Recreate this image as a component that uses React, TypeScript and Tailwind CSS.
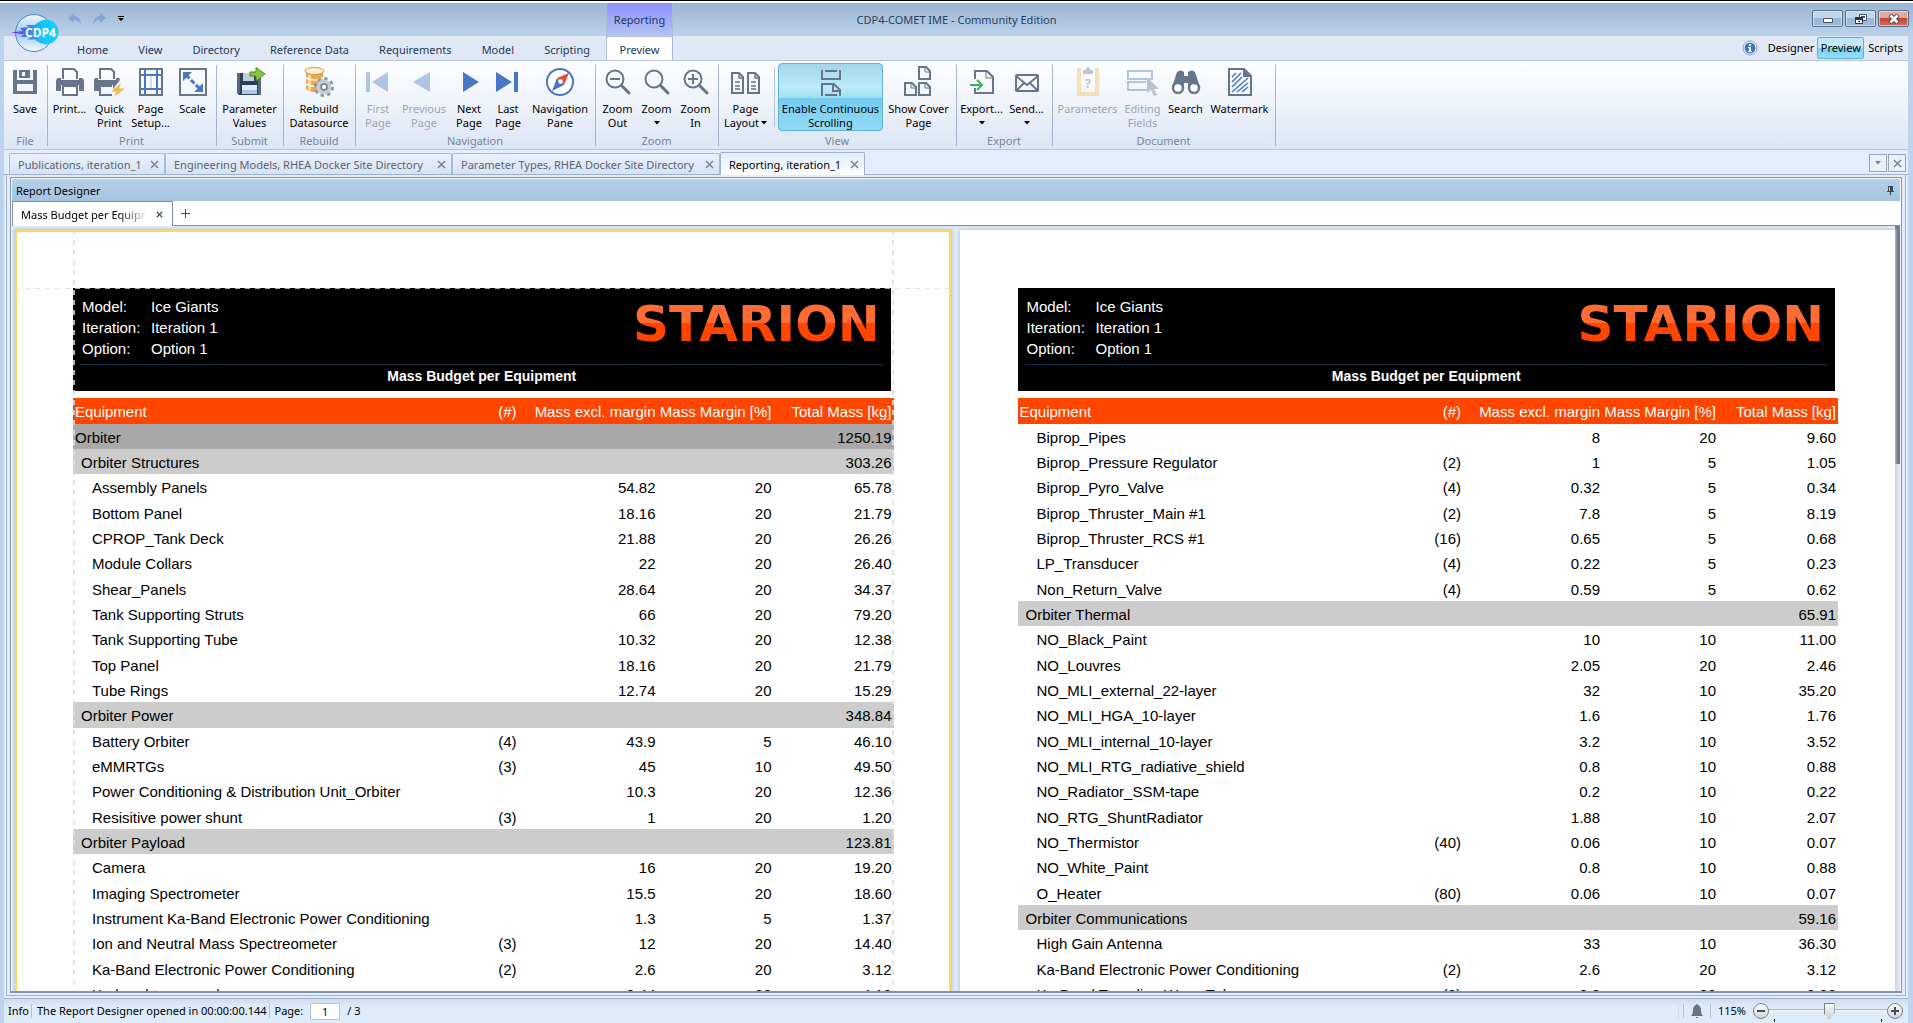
import React from 'react';
import { clsx } from 'clsx';

const SLATE = '#66758a';
const BLUE = '#4a76c3';

/* ---------- icons ---------- */

const Icon: React.FC<{ children: React.ReactNode; faded?: boolean }> = ({ children, faded }) => (
  <svg viewBox="0 0 32 32" className={clsx('h-8 w-8 shrink-0', faded && 'opacity-40')} fill="none" aria-hidden="true">
    {children}
  </svg>
);

const SaveIcon = () => (
  <Icon>
    <path fill={SLATE} fillRule="evenodd" d="M4 4h4v10h16V4h4v24H4zM8 18v7h16v-7z" />
    <path fill={SLATE} fillRule="evenodd" d="M10 4h11v8H10zM13 6v4h3V6z" />
  </Icon>
);

const PrintIcon = () => (
  <Icon>
    <path stroke={SLATE} strokeWidth="2" d="M9 13V3h11l3 3v7" />
    <path fill={SLATE} d="M4 12h3v2h18v-2h3q2 1 2 3v10h-5v-6H7v6H2V15q0-2 2-3z" />
    <path stroke={SLATE} strokeWidth="2" fill="#fff" d="M9 20h14v9H9z" />
  </Icon>
);

const QuickPrintIcon = () => (
  <Icon>
    <path stroke={SLATE} strokeWidth="2" d="M6 13V3h11l3 3v7" />
    <path fill={SLATE} d="M1 12h3v2h18v-2h3q1 1 1 2l-7 9v-4H5v6H0V14z" />
    <path stroke={SLATE} strokeWidth="2" d="M18 20H6v9h12" />
    <path fill="#f2b84b" d="M27 17 17 25.500h5.500L20 31l11-8.500h-6z" />
  </Icon>
);

const PageSetupIcon = () => (
  <Icon>
    <path stroke={SLATE} strokeWidth="2" d="M5 3h22v26H5z" />
    <path stroke={BLUE} strokeWidth="2" d="M10 4v24M22 4v24M6 9h20M6 23h20" />
    <path stroke="#a9c0e8" d="M16 10v12" />
  </Icon>
);

const ScaleIcon = () => (
  <Icon>
    <path stroke={SLATE} strokeWidth="2" d="M3 3h26v26H3z" />
    <path fill={BLUE} d="M6 6h9l-9 9zM26 26h-9l9-9z" />
    <path stroke={BLUE} strokeWidth="3" strokeDasharray="5 2" d="m9 9 14 14" />
  </Icon>
);

const ParameterValuesIcon = () => (
  <Icon>
    <path fill="#2f3f57" d="M3 7h24v22H5l-2-2z" />
    <path fill="#56677f" d="M3 7h3v20H3zM24 7h3v22h-3z" />
    <path fill="#c3cedd" d="M9 7h11v8H9z" />
    <path fill="#dcebfa" d="M8 19h15v9H8z" />
    <path fill="#a9c9ec" d="M8 24h15v4H8z" />
    <path fill="#8cc63e" stroke="#4d8a1c" d="M16 6h6V1.500L31 8l-9 7v-5h-6z" />
  </Icon>
);

const RebuildIcon = () => (
  <Icon>
    <path fill="#f0a743" d="M3 5v18q4 4 14 3l3-4V5z" />
    <path fill="#fbd9a0" d="M5 8v16l3 1V9z" />
    <ellipse cx="11.500" cy="5" rx="9.500" ry="3.500" fill="#fff1d8" stroke="#d99336" />
    <path stroke="#fff" strokeWidth="1.500" d="M3 12q8 4 17 0M3 18q8 4 14 1" />
    <circle cx="21" cy="21" r="8" stroke="#8a93a3" strokeWidth="4" strokeDasharray="3.140 3.140" />
    <circle cx="21" cy="21" r="5.500" fill="#dfe3ea" stroke="#c7cdd8" strokeWidth="4" />
    <circle cx="21" cy="21" r="3" fill="#fff" stroke="#707a8b" strokeWidth="1.500" />
  </Icon>
);

const FirstIcon = () => (
  <Icon faded>
    <path fill={BLUE} d="M4 6h4v20H4zM26 6v20L10 16z" />
  </Icon>
);
const PreviousIcon = () => (
  <Icon faded>
    <path fill={BLUE} d="M22 6v20L5 16z" />
  </Icon>
);
const NextIcon = () => (
  <Icon>
    <path fill={BLUE} d="M10 6v20l16-10z" />
  </Icon>
);
const LastIcon = () => (
  <Icon>
    <path fill={BLUE} d="M4 6v20l16-10zM22 6h4v20h-4z" />
  </Icon>
);

const CompassIcon = () => (
  <Icon>
    <circle cx="16" cy="16" r="13" stroke={BLUE} strokeWidth="2" fill="#fff" />
    <path fill="#e54b4b" d="M25 7 20 19l-7-7z" />
    <path fill={BLUE} d="m8 25 5-13 7 7z" />
    <circle cx="16.500" cy="15.500" r="2.300" fill="#fff" />
  </Icon>
);

const ZoomIcon: React.FC<{ sign?: 'in' | 'out' }> = ({ sign }) => (
  <Icon>
    <circle cx="13" cy="13" r="8.500" stroke={SLATE} strokeWidth="2" />
    <path stroke={SLATE} strokeWidth="3" strokeLinecap="round" d="m20 20 7 7" />
    {sign && <path stroke={SLATE} strokeWidth="2" d={sign === 'in' ? 'M8 13h10M13 8v10' : 'M8 13h10'} />}
  </Icon>
);

const PageLayoutIcon = () => (
  <Icon>
    <path stroke={SLATE} strokeWidth="2" d="M2 7h7l4 4v16H2zM18 7h7l4 4v16H18z" />
    <path stroke={SLATE} strokeWidth="1.500" d="M9 7v5h4M25 7v5h4M5 16h5M5 20h5M5 23h5M21 16h5M21 20h5M21 23h5" />
  </Icon>
);

const ContinuousIcon = () => (
  <Icon>
    <path stroke={SLATE} strokeWidth="2" d="M7 4v9h18V4M10 5h12M7 30V18h12l6 6v6M10 29h12" />
    <path stroke={SLATE} strokeWidth="2" d="M18 18v7h7" />
  </Icon>
);

const CoverPageIcon = () => (
  <Icon>
    <path stroke={SLATE} strokeWidth="2" d="M16 1h7l4 4v8H16zM2 17h7l4 4v8H2zM16 17h7l4 4v8H16z" />
    <path stroke={SLATE} d="M22 1v5h5M8 17v5h5M22 17v5h5" />
  </Icon>
);

const ExportIcon = () => (
  <Icon>
    <path stroke={SLATE} strokeWidth="2" d="M9 13V5h12l6 6v16H9v-5" />
    <path stroke={SLATE} d="M20 5v7h7" />
    <path stroke="#3fae5f" strokeWidth="2" d="M4 19h11M11 14l5 5-5 5" />
  </Icon>
);

const SendIcon = () => (
  <Icon>
    <rect x="5" y="9" width="22" height="16" rx="1" stroke={SLATE} strokeWidth="2" />
    <path stroke={SLATE} strokeWidth="2" d="m5 10 11 9 11-9M5 25l8-8M27 25l-8-8" />
  </Icon>
);

const ParametersIcon = () => (
  <Icon faded>
    <path stroke="#edbe55" strokeWidth="4" d="M9 4H7v24h18V4h-2" />
    <path fill={SLATE} d="M11 4h3q0-3 2-3t2 3h3v4H11z" />
    <text x="16" y="22" textAnchor="middle" className="font-['Open_Sans'] text-[13px] font-bold" fill={SLATE}>?</text>
  </Icon>
);

const EditingFieldsIcon = () => (
  <Icon faded>
    <path stroke={BLUE} strokeWidth="2" d="M20 24H1v-8h18M1 5h24v8H1z" />
    <path fill={SLATE} d="M20 11v16l4-3 3 6 3-1-3-6h5z" />
  </Icon>
);

const SearchIcon = () => (
  <Icon>
    <path fill={SLATE} d="M7 6q4-3 7 0v4h4V6q4-3 7 0l5 15H18v-4h-4v4H2z" />
    <circle cx="8" cy="22" r="5" fill="#fff" stroke={SLATE} strokeWidth="2.500" />
    <circle cx="24" cy="22" r="5" fill="#fff" stroke={SLATE} strokeWidth="2.500" />
  </Icon>
);

const WatermarkIcon = () => (
  <Icon>
    <path stroke={SLATE} strokeWidth="2" d="M5 3h15l7 7v19H5z" />
    <path fill={SLATE} d="M19 3v8h8z" />
    <path
      stroke={BLUE}
      strokeWidth="1.500"
      d="m8 11 4-4M8 16l9-9M8 21 18 11M8 26 24 12M13 26l11-9M18 26l6-5"
    />
  </Icon>
);

const AppLogo = () => (
  <svg viewBox="0 0 48 40" className="h-10 w-12" aria-label="CDP4">
    <defs>
      <linearGradient id="orb" x1="0" y1="0" x2="0" y2="1">
        <stop offset="0" stopColor="#f2f9ff" />
        <stop offset="0.500" stopColor="#9cc9ee" />
        <stop offset="1" stopColor="#f4faff" />
      </linearGradient>
      <linearGradient id="comet" x1="0" y1="0" x2="1" y2="0">
        <stop offset="0" stopColor="#8a18f0" />
        <stop offset="0.350" stopColor="#3b7df5" />
        <stop offset="0.700" stopColor="#12ccff" />
      </linearGradient>
    </defs>
    <circle cx="23" cy="20" r="18.500" fill="url(#orb)" stroke="#4b87bd" />
    <path
      fill="url(#comet)"
      d="M0 19.500 12 18l-3-3 9-1-3-2h9q5-5 11-5.500a12.500 12.500 0 0 1 0 25q-7-1-11-5h-8l4-2-11-1 4-2z"
    />
    <text x="14" y="24" className="font-['Open_Sans'] text-[12px] font-bold" fill="#fff">CDP4</text>
  </svg>
);

/* ---------- ribbon ---------- */

interface RibbonItem {
  lines: string[];
  icon: React.ReactNode;
  width: string;
  arrow?: 'inline' | 'below';
  disabled?: boolean;
  active?: boolean;
  divider?: boolean;
}

interface RibbonGroup {
  label: string;
  width: string;
  items: RibbonItem[];
}

const ribbonGroups: RibbonGroup[] = [
  { label: 'File', width: 'w-[44px]', items: [{ lines: ['Save'], icon: <SaveIcon />, width: 'w-[40px]' }] },
  {
    label: 'Print',
    width: 'w-[169px]',
    items: [
      { lines: ['Print...'], icon: <PrintIcon />, width: 'w-[40px]' },
      { lines: ['Quick', 'Print'], icon: <QuickPrintIcon />, width: 'w-[40px]' },
      { lines: ['Page', 'Setup...'], icon: <PageSetupIcon />, width: 'w-[42px]' },
      { lines: ['Scale'], icon: <ScaleIcon />, width: 'w-[42px]' },
    ],
  },
  { label: 'Submit', width: 'w-[67px]', items: [{ lines: ['Parameter', 'Values'], icon: <ParameterValuesIcon />, width: 'w-[62px]' }] },
  { label: 'Rebuild', width: 'w-[72px]', items: [{ lines: ['Rebuild', 'Datasource'], icon: <RebuildIcon />, width: 'w-[68px]' }] },
  {
    label: 'Navigation',
    width: 'w-[240px]',
    items: [
      { lines: ['First', 'Page'], icon: <FirstIcon />, width: 'w-[40px]', disabled: true },
      { lines: ['Previous', 'Page'], icon: <PreviousIcon />, width: 'w-[52px]', disabled: true },
      { lines: ['Next', 'Page'], icon: <NextIcon />, width: 'w-[38px]' },
      { lines: ['Last', 'Page'], icon: <LastIcon />, width: 'w-[40px]' },
      { lines: ['Navigation', 'Pane'], icon: <CompassIcon />, width: 'w-[64px]' },
    ],
  },
  {
    label: 'Zoom',
    width: 'w-[123px]',
    items: [
      { lines: ['Zoom', 'Out'], icon: <ZoomIcon sign="out" />, width: 'w-[39px]' },
      { lines: ['Zoom'], icon: <ZoomIcon />, width: 'w-[39px]', arrow: 'below' },
      { lines: ['Zoom', 'In'], icon: <ZoomIcon sign="in" />, width: 'w-[39px]' },
    ],
  },
  {
    label: 'View',
    width: 'w-[238px]',
    items: [
      { lines: ['Page', 'Layout'], icon: <PageLayoutIcon />, width: 'w-[51px]', arrow: 'inline' },
      { lines: ['Enable Continuous', 'Scrolling'], icon: <ContinuousIcon />, width: 'w-[105px]', active: true, divider: true },
      { lines: ['Show Cover', 'Page'], icon: <CoverPageIcon />, width: 'w-[71px]' },
    ],
  },
  {
    label: 'Export',
    width: 'w-[96px]',
    items: [
      { lines: ['Export...'], icon: <ExportIcon />, width: 'w-[45px]', arrow: 'below' },
      { lines: ['Send...'], icon: <SendIcon />, width: 'w-[45px]', arrow: 'below' },
    ],
  },
  {
    label: 'Document',
    width: 'w-[223px]',
    items: [
      { lines: ['Parameters'], icon: <ParametersIcon />, width: 'w-[66px]', disabled: true },
      { lines: ['Editing', 'Fields'], icon: <EditingFieldsIcon />, width: 'w-[44px]', disabled: true },
      { lines: ['Search'], icon: <SearchIcon />, width: 'w-[42px]' },
      { lines: ['Watermark'], icon: <WatermarkIcon />, width: 'w-[66px]' },
    ],
  },
];

const DownArrow = () => (
  <svg viewBox="0 0 6 4" className="h-1 w-1.5" aria-hidden="true">
    <path fill="currentColor" d="M0 0h6L3 3.500z" />
  </svg>
);

const RibbonButton: React.FC<{ item: RibbonItem }> = ({ item }) => (
  <>
    {item.divider && <span className="mx-[3px] mt-1 h-[60px] w-px bg-[#b4c3dc]" />}
    <button
      type="button"
      disabled={item.disabled}
      className={clsx(
        'flex h-[68px] shrink-0 flex-col items-center rounded-sm border whitespace-nowrap',
        item.width,
        item.active
          ? 'border-[#5fb1d8] bg-[linear-gradient(#a3d6ea_0,#bdeafa_24px,#9fdef5_34px,#74cdf1_34px,#92d9f6_100%)]'
          : 'border-transparent',
        item.disabled ? 'text-[#a0a5ae]' : 'text-black'
      )}
    >
      <span className="flex h-[38px] items-start pt-[2px]">{item.icon}</span>
      {item.lines.map((line, i) => (
        <span key={line} className="flex items-center gap-[2px] leading-[14px]">
          {line}
          {item.arrow === 'inline' && i === item.lines.length - 1 && <DownArrow />}
        </span>
      ))}
      {item.arrow === 'below' && (
        <span className="flex h-[14px] items-center">
          <DownArrow />
        </span>
      )}
    </button>
  </>
);

const Ribbon = () => (
  <div className="flex h-[90px] shrink-0 border-y border-[#b4c4de] bg-[linear-gradient(#fdfeff,#eef3fa_50%,#e3e9f6_80%,#dbe7f4)]">
    {ribbonGroups.map(group => (
      <section key={group.label} className={clsx('relative flex shrink-0 flex-col items-center pt-[2px] pr-[2px]', group.width)}>
        <div className="flex justify-center">
          {group.items.map(item => (
            <RibbonButton key={item.lines.join(' ')} item={item} />
          ))}
        </div>
        <h2 className="mt-[3px] leading-[14px] text-[#76849b]">{group.label}</h2>
        <span className="absolute top-1 right-0 h-[81px] w-px bg-[#a5b5cd]" />
      </section>
    ))}
  </div>
);

/* ---------- window chrome ---------- */

const ribbonTabs = ['Home', 'View', 'Directory', 'Reference Data', 'Requirements', 'Model', 'Scripting'];

const windowButton =
  'flex items-center justify-center rounded-[2px] border border-[#55708f] h-[17px] w-[31px] shadow-[inset_0_0_0_1px_#ffffff80]';

const TitleBar = () => (
  <div className="grid h-[33px] shrink-0 grid-cols-[1fr_auto_1fr] items-start bg-linear-to-b from-[#9ab5d4] to-[#bdd1ea]">
    <div className="flex items-center gap-[12px] pt-[10px] pl-[68px]">
      <button type="button" aria-label="Undo">
        <svg viewBox="0 0 13 11" className="h-[11px] w-[13px]">
          <path fill="#86a5d6" d="M6 0v3q6 0 7 8-2-4-7-4v3L0 5z" />
        </svg>
      </button>
      <button type="button" aria-label="Redo">
        <svg viewBox="0 0 13 11" className="h-[11px] w-[13px]">
          <path fill="#86a5d6" d="M7 0v3Q1 3 0 11q2-4 7-4v3l6-5z" />
        </svg>
      </button>
      <button type="button" aria-label="Customize toolbar">
        <svg viewBox="0 0 6 5" className="h-[5px] w-[6px]">
          <path d="M0 0h6v1H0zM0 2h6L3 5z" />
        </svg>
      </button>
    </div>
    <h1 className="pt-[8px] leading-[18px] text-[#27405f]">CDP4-COMET IME - Community Edition</h1>
    <div className="flex justify-end gap-[2px] pt-[7px] pr-[4px]">
      <button type="button" aria-label="Minimize" className={clsx(windowButton, 'bg-[linear-gradient(#c4d6ea_50%,#9db9d8_50%)]')}>
        <svg viewBox="0 0 12 10" className="h-[10px] w-[12px]">
          <path fill="#fff" stroke="#44536b" d="M1.500 4.500h9v4h-9z" />
        </svg>
      </button>
      <button type="button" aria-label="Restore" className={clsx(windowButton, 'bg-[linear-gradient(#c4d6ea_50%,#9db9d8_50%)]')}>
        <svg viewBox="0 0 12 12" className="h-[12px] w-[12px]">
          <path fill="#fff" stroke="#44536b" d="M4.500 1.500h7v6h-7z" />
          <path fill="#44536b" d="M6 3h4v2H6z" />
          <path fill="#fff" stroke="#27344a" d="M.500 4.500h7v6h-7z" />
          <path fill="#27344a" d="M0 4h8v3H0zM3 8h2v1H3z" />
        </svg>
      </button>
      <button
        type="button"
        aria-label="Close"
        className={clsx(windowButton, 'border-[#5c1822] bg-[linear-gradient(#e4a79e_50%,#c2452f_50%,#d2705c)]')}
      >
        <svg viewBox="0 0 12 10" className="h-[10px] w-[12px]">
          <path stroke="#4a4d62" strokeWidth="4.500" d="m2 1 8 8M10 1 2 9" />
          <path stroke="#fff" strokeWidth="2.500" d="m2.500 1.500 7 7M9.500 1.500l-7 7" />
        </svg>
      </button>
    </div>
  </div>
);

const RibbonTabs = () => (
  <nav className="flex h-[24px] shrink-0 items-stretch bg-[#dfe8f4] pl-[73px] text-[#1e3957]">
    <div className="flex w-[529px] items-center justify-between pt-[3px] pr-[16px]">
      {ribbonTabs.map(tab => (
        <a key={tab} href="#" className="whitespace-nowrap">
          {tab}
        </a>
      ))}
    </div>
    {/* Contextual tab reaches up into the title bar */}
    <div className="-mt-[33px] flex w-[67px] flex-col border-x border-[#a9bcd8] bg-linear-to-b from-[#8f90ff] via-[#b5c4ee] via-60% to-[#bdd1ea] text-center">
      <span className="h-[34px] pt-[8px] leading-[18px]">Reporting</span>
      <a href="#" aria-current="page" className="-mb-px h-[24px] rounded-t-[2px] bg-white pt-[4px] leading-[18px]">
        Preview
      </a>
    </div>
    <div className="flex flex-1 items-center justify-end text-black">
      <svg viewBox="0 0 16 16" className="mr-[7px] h-4 w-4" aria-label="Info">
        <circle cx="8" cy="8" r="7" fill="#fff" stroke="#8b9cc0" />
        <circle cx="8" cy="8" r="5.500" fill="#3f74c6" />
        <path fill="#fff" d="M7 4h2v2H7zM6 7h3v4h1v1H6v-1h1V8H6z" />
      </svg>
      <button type="button" className="px-[3px]">Designer</button>
      <button
        type="button"
        className="h-[22px] w-[47px] rounded-[2px] border border-[#5fb1d8] bg-[linear-gradient(#bde9f9_50%,#7dd0f2_50%,#97dbf6)]"
      >
        Preview
      </button>
      <button type="button" className="pr-[5px] pl-[4px]">Scripts</button>
    </div>
  </nav>
);

const Cross: React.FC<{ size?: string }> = ({ size = 'h-[9px] w-[9px]' }) => (
  <svg viewBox="0 0 9 9" className={size} aria-hidden="true">
    <path stroke="currentColor" strokeWidth="1.500" d="m1 1 7 7M8 1 1 8" />
  </svg>
);

const documentTabs = [
  { label: 'Publications, iteration_1', width: 'w-[156px]' },
  { label: 'Engineering Models, RHEA Docker Site Directory', width: 'w-[287px]' },
  { label: 'Parameter Types, RHEA Docker Site Directory', width: 'w-[268px]' },
  { label: 'Reporting, iteration_1', width: 'w-[145px]', active: true },
];

const DocumentTabs = () => (
  <div className="flex h-[25px] shrink-0 items-end border-b border-[#9fb1cc] bg-[#e2eefe] pr-[2px] pl-[5px]">
    {documentTabs.map(tab => (
      <div
        key={tab.label}
        className={clsx(
          'flex items-center justify-between rounded-t-[2px] border border-b-0 pt-[2px] pr-[5px] pl-[8px] whitespace-nowrap',
          tab.width,
          tab.active
            ? '-mb-px h-[23px] border-[#9fb1cc] bg-linear-to-b from-[#dcedfb] to-white text-black'
            : 'h-[21px] border-[#a9b9d2] bg-linear-to-b from-[#eaf2fc] to-[#d5e3f5] text-[#5b6470]'
        )}
      >
        <a href="#">{tab.label}</a>
        <button type="button" aria-label={`Close ${tab.label}`} className="pb-[2px] text-[#76849b]">
          <Cross />
        </button>
      </div>
    ))}
    <div className="flex flex-1 justify-end gap-px pb-[2px] text-[#76849b]">
      <button type="button" aria-label="Open documents" className="flex h-[18px] w-[18px] items-center justify-center border border-[#94a5be] bg-[#e9f0f8]">
        <DownArrow />
      </button>
      <button type="button" aria-label="Close document" className="flex h-[18px] w-[18px] items-center justify-center border border-[#94a5be] bg-[#e9f0f8]">
        <Cross />
      </button>
    </div>
  </div>
);

/* ---------- report ---------- */

// [name, count, mass excl. margin, margin, total]
type Row = { level: 0 | 1 | 2; cells: [string, string, string, string, string] };

const group = (level: 0 | 1, name: string, total: string): Row => ({ level, cells: [name, '', '', '', total] });
const item = (name: string, count: string, mass: string, margin: string, total: string): Row => ({
  level: 2,
  cells: [name, count, mass, margin, total],
});

const leftRows: Row[] = [
  group(0, 'Orbiter', '1250.19'),
  group(1, 'Orbiter Structures', '303.26'),
  item('Assembly Panels', '', '54.82', '20', '65.78'),
  item('Bottom Panel', '', '18.16', '20', '21.79'),
  item('CPROP_Tank Deck', '', '21.88', '20', '26.26'),
  item('Module Collars', '', '22', '20', '26.40'),
  item('Shear_Panels', '', '28.64', '20', '34.37'),
  item('Tank Supporting Struts', '', '66', '20', '79.20'),
  item('Tank Supporting Tube', '', '10.32', '20', '12.38'),
  item('Top Panel', '', '18.16', '20', '21.79'),
  item('Tube Rings', '', '12.74', '20', '15.29'),
  group(1, 'Orbiter Power', '348.84'),
  item('Battery Orbiter', '(4)', '43.9', '5', '46.10'),
  item('eMMRTGs', '(3)', '45', '10', '49.50'),
  item('Power Conditioning & Distribution Unit_Orbiter', '', '10.3', '20', '12.36'),
  item('Resisitive power shunt', '(3)', '1', '20', '1.20'),
  group(1, 'Orbiter Payload', '123.81'),
  item('Camera', '', '16', '20', '19.20'),
  item('Imaging Spectrometer', '', '15.5', '20', '18.60'),
  item('Instrument Ka-Band Electronic Power Conditioning', '', '1.3', '5', '1.37'),
  item('Ion and Neutral Mass Spectreometer', '(3)', '12', '20', '14.40'),
  item('Ka-Band Electronic Power Conditioning', '(2)', '2.6', '20', '3.12'),
  item('Ka-band transponder', '', '3.44', '20', '4.13'),
];

const rightRows: Row[] = [
  item('Biprop_Pipes', '', '8', '20', '9.60'),
  item('Biprop_Pressure Regulator', '(2)', '1', '5', '1.05'),
  item('Biprop_Pyro_Valve', '(4)', '0.32', '5', '0.34'),
  item('Biprop_Thruster_Main #1', '(2)', '7.8', '5', '8.19'),
  item('Biprop_Thruster_RCS #1', '(16)', '0.65', '5', '0.68'),
  item('LP_Transducer', '(4)', '0.22', '5', '0.23'),
  item('Non_Return_Valve', '(4)', '0.59', '5', '0.62'),
  group(1, 'Orbiter Thermal', '65.91'),
  item('NO_Black_Paint', '', '10', '10', '11.00'),
  item('NO_Louvres', '', '2.05', '20', '2.46'),
  item('NO_MLI_external_22-layer', '', '32', '10', '35.20'),
  item('NO_MLI_HGA_10-layer', '', '1.6', '10', '1.76'),
  item('NO_MLI_internal_10-layer', '', '3.2', '10', '3.52'),
  item('NO_MLI_RTG_radiative_shield', '', '0.8', '10', '0.88'),
  item('NO_Radiator_SSM-tape', '', '0.2', '10', '0.22'),
  item('NO_RTG_ShuntRadiator', '', '1.88', '10', '2.07'),
  item('NO_Thermistor', '(40)', '0.06', '10', '0.07'),
  item('NO_White_Paint', '', '0.8', '10', '0.88'),
  item('O_Heater', '(80)', '0.06', '10', '0.07'),
  group(1, 'Orbiter Communications', '59.16'),
  item('High Gain Antenna', '', '33', '10', '36.30'),
  item('Ka-Band Electronic Power Conditioning', '(2)', '2.6', '20', '3.12'),
  item('Ka-Band Traveling Wave Tube', '(2)', '2.8', '20', '3.36'),
];

const details = [
  ['Model:', 'Ice Giants'],
  ['Iteration:', 'Iteration 1'],
  ['Option:', 'Option 1'],
];

const headings = ['Equipment', '(#)', 'Mass excl. margin', 'Mass Margin [%]', 'Total Mass [kg]'];

const ReportPage: React.FC<{ rows: Row[]; selected?: boolean }> = ({ rows, selected }) => (
  <article
    className={clsx(
      "relative flex-1 bg-white pt-[58px] pr-[57px] pl-[58px] font-['Liberation_Sans',Arial,sans-serif] text-[15px] text-black",
      selected ? 'shadow-[0_0_3px_1px_#b9c6e0]' : 'shadow-[0_0_3px_1px_#c3cee4]'
    )}
  >
    <header className="mr-[3px] h-[103px] bg-black text-white">
      <div className="flex h-[76px] items-start justify-between pt-[8px] pr-[11px] pl-[9px]">
        <dl className="grid grid-cols-[69px_auto] leading-[21px]">
          {details.map(([term, value]) => (
            <React.Fragment key={term}>
              <dt>{term}</dt>
              <dd>{value}</dd>
            </React.Fragment>
          ))}
        </dl>
        <div className="bg-[linear-gradient(#ff6b35_48%,#ff4500_48%)] bg-clip-text font-['DejaVu_Sans',sans-serif] text-[50px] leading-[56px] font-bold text-transparent">
          STARION
        </div>
      </div>
      <h2 className="mx-[7px] border-t border-[#12304c] pt-px text-center text-[14px] leading-[20px] font-bold">
        Mass Budget per Equipment
      </h2>
    </header>
    <table className="mt-[7px] w-full table-fixed border-collapse whitespace-nowrap">
      <colgroup>
        <col />
        <col className="w-[49px]" />
        <col className="w-[139px]" />
        <col className="w-[116px]" />
        <col className="w-[122px]" />
      </colgroup>
      <thead>
        <tr className="h-[26px] bg-[#ff4500] text-white">
          {headings.map((heading, i) => (
            <th
              key={heading}
              scope="col"
              className={clsx('pt-[2px] pb-0 leading-[20px] font-normal', i === 0 ? 'pl-[2px] text-left' : 'text-right', i === 4 && 'pr-[2px]')}
            >
              {heading}
            </th>
          ))}
        </tr>
      </thead>
      <tbody>
        {rows.map(({ level, cells }) => (
          <tr
            key={cells[0]}
            className={clsx('h-[25px] nth-[3n]:h-[26px]', level === 0 && 'bg-[#a9a9a9]', level === 1 && 'bg-[#cccccc]')}
          >
            {cells.map((cell, i) => (
              <td
                key={i}
                className={clsx(
                  'pt-[2px] pb-0 leading-[20px]',
                  i > 0 && 'text-right',
                  i === 4 && 'pr-[2px]',
                  i === 0 && level === 0 && 'pl-[2px]',
                  i === 0 && level === 1 && 'pl-[8px]',
                  i === 0 && level === 2 && 'pl-[19px]'
                )}
              >
                {cell}
              </td>
            ))}
          </tr>
        ))}
      </tbody>
    </table>
    {selected && (
      <>
        {/* Margin guides and selection frame */}
        <span className="absolute inset-y-0 left-[58px] w-[2px] bg-[repeating-linear-gradient(#ddddddcc_0_5px,transparent_5px_10px)]" />
        <span className="absolute inset-y-0 right-[57px] w-[2px] bg-[repeating-linear-gradient(#ddddddcc_0_5px,transparent_5px_10px)]" />
        <span className="absolute inset-x-0 top-[58px] h-px bg-[repeating-linear-gradient(90deg,#ddddddcc_0_5px,transparent_5px_10px)]" />
        <span className="absolute inset-0 border-2 border-b-0 border-[#ffd955]" />
      </>
    )}
  </article>
);

const ReportPanel = () => (
  <section className="flex min-h-0 flex-1 flex-col border border-b-2 border-[#8494ae] bg-white p-px pb-0">
    <div className="flex h-[22px] shrink-0 items-center justify-between bg-linear-to-b from-[#b7d0e8] to-[#a4c3e1] pt-px pr-[6px] pl-[4px] text-black">
      <h2>Report Designer</h2>
      <button type="button" aria-label="Pin">
        <svg viewBox="0 0 7 9" className="h-[9px] w-[7px]">
          <path fill="#3c4758" d="M1 0h5v5h1v1H4v3H3V6H0V5h1zM2 1v4h1V1z" />
        </svg>
      </button>
    </div>
    <div className="flex h-[25px] shrink-0 items-stretch border-b border-[#838da0] bg-white text-black">
      <div className="-mb-px flex w-[161px] items-center justify-between border border-b-0 border-[#838da0] bg-white pt-px pr-[9px] pl-[8px]">
        <a href="#" className="w-[124px] overflow-hidden bg-[linear-gradient(90deg,#000_80%,#00000020)] bg-clip-text whitespace-nowrap text-transparent">
          Mass Budget per Equipment
        </a>
        <button type="button" aria-label="Close report" className="text-[#444b58]">
          <Cross size="h-[7px] w-[7px]" />
        </button>
      </div>
      <button type="button" aria-label="New report" className="px-[8px] text-[#444b58]">
        <svg viewBox="0 0 9 9" className="h-[9px] w-[9px]">
          <path stroke="currentColor" d="M4.500 0v9M0 4.500h9" />
        </svg>
      </button>
    </div>
    <div className="flex min-h-0 flex-1 overflow-hidden bg-[#dfe9f8]">
      <div className="flex flex-1 gap-[9px] pt-[4px] pl-[3px]">
        <ReportPage rows={leftRows} selected />
        <ReportPage rows={rightRows} />
      </div>
      <div className="w-[5px] bg-[#dbe5f4]">
        <div className="h-[238px] bg-[#6b7585]" />
      </div>
    </div>
  </section>
);

/* ---------- status bar ---------- */

const Separator = () => <span className="h-[14px] w-px bg-[#b3c2d8]" />;

const zoomButton =
  'flex h-[16px] w-[16px] items-center justify-center rounded-full border border-[#7b7f86] bg-linear-to-b from-white to-[#d2d4d8]';

const StatusBar = () => (
  <footer className="flex h-[25px] shrink-0 items-center border-t border-[#9fb1cc] bg-linear-to-b from-[#cfdcec] to-[#deebf8] to-30% pr-[5px] pl-[4px] text-black">
    <span>Info</span>
    <span className="mr-[5px] ml-[2px] flex"><Separator /></span>
    <span>The Report Designer opened in 00:00:00.144</span>
    <span className="mr-[5px] ml-[2px] flex"><Separator /></span>
    <label htmlFor="page">Page:</label>
    <input
      id="page"
      type="text"
      defaultValue="1"
      className="mx-[7px] h-[17px] w-[30px] rounded-[1px] border border-[#b9c3d2] bg-white text-center"
    />
    <span>/ 3</span>
    <div className="flex flex-1 items-center justify-end">
      <span className="mr-[4px] flex opacity-40"><Separator /></span>
      <Separator />
      <svg viewBox="0 0 12 14" className="mx-[7px] h-[14px] w-[12px]" aria-label="Notifications">
        <path fill={SLATE} d="M6 0q1 0 1 1 3 1 3 5 0 4 2 6H0q2-2 2-6 0-4 3-5 0-1 1-1zM5 13h2v1H5z" />
      </svg>
      <Separator />
      <label htmlFor="zoom" className="mr-[7px] ml-[7px]">115%</label>
      <button type="button" aria-label="Zoom out" className={zoomButton}>
        <span className="h-[2px] w-[8px] bg-[#4a4d52]" />
      </button>
      <span className="relative flex h-[16px] w-[118px] items-center">
        <input
          id="zoom"
          type="range"
          defaultValue={51}
          className="h-[16px] w-full appearance-none bg-[linear-gradient(transparent_6px,#b4b7bc_6px_7px,#eceef0_7px_9px,transparent_9px)] [&::-webkit-slider-thumb]:h-[16px] [&::-webkit-slider-thumb]:w-[11px] [&::-webkit-slider-thumb]:appearance-none [&::-webkit-slider-thumb]:bg-[linear-gradient(#f7f7f7,#cfd1d4)] [&::-webkit-slider-thumb]:[clip-path:polygon(0_0,100%_0,100%_65%,50%_100%,0_65%)] [&::-webkit-slider-thumb]:border [&::-webkit-slider-thumb]:border-[#7b7f86]"
        />
        <span className="absolute top-[16px] left-[5px] h-[3px] w-px bg-black" />
        <span className="absolute top-[16px] right-[5px] h-[3px] w-px bg-black" />
      </span>
      <button type="button" aria-label="Zoom in" className={zoomButton}>
        <svg viewBox="0 0 8 8" className="h-[8px] w-[8px]">
          <path stroke="#4a4d52" strokeWidth="2" d="M4 0v8M0 4h8" />
        </svg>
      </button>
    </div>
  </footer>
);

export default function App() {
  return (
    <div className="flex h-screen flex-col overflow-hidden border-t border-black bg-[#bdd2ec] font-['Noto_Sans','Open_Sans',sans-serif] text-[11px] leading-[16px]">
      <div className="h-[2px] shrink-0 bg-white" />
      <TitleBar />
      <div className="relative mr-[5px] ml-[4px] flex min-h-0 flex-1 flex-col">
        <RibbonTabs />
        <Ribbon />
        <DocumentTabs />
        <main className="flex min-h-0 flex-1 flex-col bg-[#e2eefe]">
          <div className="mx-[2px] mb-[2px] flex min-h-0 flex-1 flex-col border border-t-0 border-[#9fb1cc] px-[3px] pt-[2px] pb-[2px]">
            <ReportPanel />
          </div>
        </main>
        <StatusBar />
        <div className="absolute -top-[23px] left-[7px]">
          <AppLogo />
        </div>
      </div>
    </div>
  );
}
